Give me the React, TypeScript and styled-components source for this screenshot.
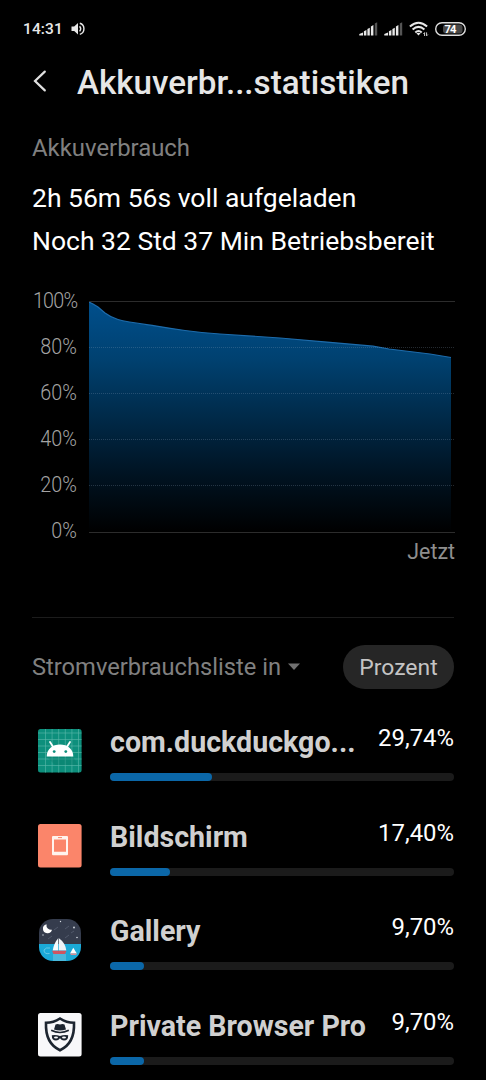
import React from 'react'
import styled, { createGlobalStyle } from 'styled-components'

const GlobalStyle = createGlobalStyle`
  * {
    box-sizing: border-box;
  }

  body {
    margin: 0;
    background: #000;
    font-family: Roboto, 'Liberation Sans', sans-serif;
  }

  svg {
    display: block;
    flex-shrink: 0;
  }
`

const Screen = styled.div`
  width: 486px;
  height: 1080px;
  overflow: hidden;
  background: #000;
  color: #fff;
`

const StatusBar = styled.div`
  display: flex;
  align-items: center;
  height: 57px;
  padding: 0 20px 0 23px;
`

const Clock = styled.span`
  margin-right: 8px;
  color: #e8e8e8;
  font-size: 15.5px;
  font-weight: 500;
  letter-spacing: 0.1px;
`

const StatusIcons = styled.div`
  display: flex;
  align-items: center;
  gap: 6px;
  margin-left: auto;
`

const Header = styled.header`
  display: flex;
  align-items: center;
  height: 50px;
  padding-left: 32px;
`

const BackButton = styled.button`
  width: 45px;
  padding: 0 0 2px;
  background: none;
  border: none;
`

const Title = styled.h1`
  margin: 0;
  color: #e6e6e6;
  font-size: 33.2px;
  font-weight: 500;
  white-space: nowrap;
`

const Summary = styled.section`
  padding: 27px 32px 0;
`

const SectionLabel = styled.div`
  margin-bottom: 15px;
  color: #808080;
  font-size: 23.9px;
  line-height: 28px;
`

const SummaryLine = styled.div`
  font-size: 26.5px;
  line-height: 42.6px;
  white-space: nowrap;
`

const ChartSection = styled.section`
  display: grid;
  grid-template-columns: 45px 366px;
  column-gap: 12px;
  height: 340px;
  margin: 16px 32px 0 32px;
  border-bottom: 1px solid #1c1c1c;
`

const AxisLabels = styled.div`
  display: flex;
  flex-direction: column;
  align-items: flex-end;
`

const AxisLabel = styled.span<{ isTight: boolean }>`
  color: #a4a4a4;
  font-size: 21.5px;
  font-weight: 300;
  line-height: 46px;
  letter-spacing: ${(p) => (p.isTight ? '-0.8px' : '0')};
  transform: scaleX(0.92);
  transform-origin: right center;
`

const Plot = styled.div`
  padding-top: 23px;
`

const PlotCaption = styled.div`
  margin-top: 4px;
  color: #8e8e8e;
  font-size: 21.4px;
  line-height: 26px;
  text-align: right;
`

const ListHeader = styled.div`
  display: flex;
  align-items: center;
  justify-content: space-between;
  margin: 27px 32px 0;
`

const SortLabel = styled.div`
  display: flex;
  align-items: center;
  gap: 7px;
  color: #808080;
  font-size: 23.7px;
`

const UnitButton = styled.button`
  width: 111px;
  height: 44px;
  padding: 0;
  border: none;
  border-radius: 22px;
  background: #262626;
  color: #c4c4c4;
  font-family: inherit;
  font-size: 22.9px;
`

const List = styled.div`
  padding: 40px 32px 0 38px;
`

const Row = styled.div`
  display: flex;
  align-items: flex-start;
  gap: 28px;
  height: 94.5px;
`

const RowBody = styled.div`
  flex: 1;
  min-width: 0;
`

const RowHead = styled.div`
  display: flex;
  justify-content: space-between;
  height: 44px;
`

const AppName = styled.span`
  color: #d0d0d0;
  font-size: 28.6px;
  font-weight: 700;
  line-height: 27px;
  white-space: nowrap;
`

const Percent = styled.span`
  font-size: 23.9px;
  line-height: 18px;
`

const Track = styled.div`
  height: 8px;
  border-radius: 4px;
  background: #1b1b1b;
`

const Fill = styled.div`
  height: 100%;
  border-radius: 4px;
  background: #0b67a8;
`

const SpeakerIcon = () => (
  <svg width="14" height="14" viewBox="0 0 14 14" fill="none">
    <path d="M0.5 4.6H3.2L7 1V12.6L3.2 9H0.5Z" fill="#e8e8e8" />
    <path d="M8.6 4.3Q10.8 6.8 8.6 9.4" stroke="#e8e8e8" strokeWidth="1.4" />
    <path d="M8.8 1.3C14.3 2.8 14.3 10.9 8.8 12.4" stroke="#e8e8e8" strokeWidth="1.4" />
  </svg>
)

const SignalIcon = () => (
  <svg width="19" height="14" viewBox="0 0 19 14" fill="#e8e8e8">
    <path d="M0.3 13.5V12.1L4 10.6V13.5ZM4.9 13.5V9.3L7.4 8V13.5ZM8.4 13.5V7L10.8 5.8V13.5ZM11.9 13.5V4.4L14.4 3V13.5Z" />
    <path d="M15.8 13.5V1.5L18.2 0.2V13.5Z" fill="#555" />
  </svg>
)

const WifiIcon = () => (
  <svg width="20" height="16" viewBox="0 0 20 16" fill="none" stroke="#e8e8e8" strokeWidth="2">
    <path d="M0.9 5.6Q9.5 -2.1 18.1 5.6" />
    <path d="M3.6 8.6Q9.5 3.2 15.4 8.6" />
    <path d="M6.3 11.5Q9.5 8.5 12.7 11.5" />
    <path d="M7.4 12.3L9.5 14.6L11.6 12.3Q9.5 11 7.4 12.3Z" fill="#e8e8e8" stroke="none" />
    <path d="M15.6 15V11.6L14.4 12.8M17.6 11.4V14.8L18.8 13.6" strokeWidth="0.9" />
  </svg>
)

const BatteryIcon = () => (
  <svg width="31" height="14" viewBox="0 0 31 14">
    <rect x="8" y="2.5" width="19.5" height="9" rx="3" fill="#484848" />
    <rect x="0.7" y="0.7" width="29.6" height="12.6" rx="6.3" fill="none" stroke="#dedede" strokeWidth="1.4" />
    <text x="15" y="11" fill="#fff" fontSize="11.2" fontWeight="700" textAnchor="middle" letterSpacing="-0.9">
      74
    </text>
  </svg>
)

const BackIcon = () => (
  <svg width="16" height="22" viewBox="0 0 16 22" fill="none">
    <path d="M12.8 1.6L3 11L12.8 20.4" stroke="#e0e0e0" strokeWidth="2.2" strokeLinecap="round" />
  </svg>
)

const AndroidIcon = () => (
  <svg width="44" height="44" viewBox="0 0 44 44">
    <rect width="43.6" height="43.6" rx="2.5" fill="#0d8f7c" />
    <path
      d="M7.5 0V43.6M14.1 0V43.6M20.7 0V43.6M27.3 0V43.6M33.9 0V43.6M40.5 0V43.6M0 4H43.6M0 10.5H43.6M0 17H43.6M0 23.5H43.6M0 30H43.6M0 36.5H43.6"
      stroke="#5cb9ab"
      strokeWidth="0.6"
    />
    <path d="M9 28L17 36H40L35 28Z" fill="#087866" opacity="0.35" />
    <path d="M8.7 27.5C8.7 20 14.5 15.5 22 15.5S35.3 20 35.3 27.5Z" fill="#fff" />
    <path d="M12 13L15.5 18.5M32 13L28.5 18.5" stroke="#fff" strokeWidth="1.8" strokeLinecap="round" />
    <circle cx="16.2" cy="22.6" r="1.4" fill="#0d8f7c" />
    <circle cx="27.8" cy="22.6" r="1.4" fill="#0d8f7c" />
  </svg>
)

const DisplayIcon = () => (
  <svg width="44" height="44" viewBox="0 0 44 44">
    <rect width="43.6" height="43.6" rx="2.5" fill="#fb856a" />
    <path
      d="M15 12H29Q30 12 30 13V30Q30 31.2 29 31.2H15Q14 31.2 14 30V13Q14 12 15 12ZM16 15.5V27.8H28V15.5Z"
      fill="#fff3ee"
      fillRule="evenodd"
    />
    <path d="M20 13.6H24" stroke="#fb856a" strokeWidth="1" />
  </svg>
)

const GalleryIcon = () => (
  <svg width="44" height="44" viewBox="0 0 44 44">
    <clipPath id="gallery">
      <rect x="1" y="1" width="42" height="42" rx="14" />
    </clipPath>
    <g clipPath="url(#gallery)">
      <rect width="44" height="26" fill="#353c4d" />
      <rect y="26" width="44" height="18" fill="#1ba9d7" />
      <path d="M8.5 6.2A4.6 4.6 0 1 0 14 11.8A4.8 4.8 0 0 1 8.5 6.2Z" fill="#fff" />
      <path d="M16 12L20 9M27 11L31 8M27 20L31 17M10 21L14 18M33 15L36 13" stroke="#596174" strokeWidth="0.8" />
      <g fill="#d6dbe3">
        <circle cx="36" cy="9.5" r="0.9" />
        <circle cx="22.5" cy="3.5" r="0.7" />
        <circle cx="5" cy="17" r="0.7" />
        <circle cx="39" cy="19.5" r="0.8" />
      </g>
      <path d="M11.5 35.5Q6 36.5 6 32Q8 29 12 30" stroke="#68c9e5" strokeWidth="1" fill="none" />
      <path d="M15 36H28V43H15Z" fill="#5abddd" opacity="0.75" />
      <path d="M20 20.5V32.5H14.7Q16 25 20 20.5Z" fill="#f7fafb" />
      <path d="M20.7 20Q27.5 25 28.3 32.5H20.7Z" fill="#eef2f5" />
      <path d="M14 32.7H28.5L27 36H15.5Z" fill="#cf5560" />
      <path d="M32 35.5L35.3 29.8L38.8 35.5Z" fill="#fff" />
      <path d="M32 35.5H39L38 37H33Z" fill="#d98d95" />
    </g>
  </svg>
)

const PrivateBrowserIcon = () => (
  <svg width="44" height="44" viewBox="0 0 44 44">
    <rect width="43.6" height="43.6" rx="2.5" fill="#f8f8fa" />
    <path
      d="M22 5.5Q28.5 9.8 36 9.8C36.5 22 33.5 32 22 37.2C10.5 32 7.5 22 8 9.8Q15.5 9.8 22 5.5Z"
      fill="none"
      stroke="#1d2530"
      strokeWidth="2.6"
    />
    <path d="M17.5 11.5Q19.5 10.5 22 11.5Q24.5 10.5 26.5 11.5L28 16.5Q22 18.6 16 16.5Z" fill="#1d2530" />
    <path d="M13.2 17.3Q22 21.8 30.8 17.3" fill="none" stroke="#1d2530" strokeWidth="1.6" />
    <path
      d="M13.8 22.2Q18 21.3 22 23Q26 21.3 30.2 22.2Q30.3 27.5 26 27.5Q23.6 27.5 22 25.3Q20.4 27.5 18 27.5Q13.7 27.5 13.8 22.2Z"
      fill="#1d2530"
    />
    <ellipse cx="18" cy="24.5" rx="2" ry="1" fill="#f8f8fa" />
    <ellipse cx="26" cy="24.5" rx="2" ry="1" fill="#f8f8fa" />
  </svg>
)

const CURVE =
  'M0 1L4 3L9 6L16 12Q22 16.5 29 18.5C38 21 50 22.5 66 24.8Q82 27.5 96 29.5Q112 31.7 131 33L191 37L241 41.3L284 45.2L300 48L341 53L362 56.5'

const BatteryChart = () => (
  <svg width="366" height="234" viewBox="0 0 366 234" fill="none">
    <defs>
      <linearGradient id="level" x1="0" y1="0" x2="0" y2="1">
        <stop offset="0" stopColor="#004f8c" />
        <stop offset="0.25" stopColor="#004170" />
        <stop offset="0.5" stopColor="#002a49" />
        <stop offset="0.75" stopColor="#001322" />
        <stop offset="1" stopColor="#000" />
      </linearGradient>
    </defs>
    <path d={`${CURVE}V231H0Z`} fill="url(#level)" />
    <path d={CURVE} stroke="#1d6cac" strokeWidth="1.2" />
    <path d="M0 0.5H366M0 231.5H366" stroke="#2c2c2c" />
    {[46.5, 92.5, 138.5, 184.5].map((y) => (
      <path key={y} d={`M0 ${y}H366`} stroke="#8aa4b8" strokeOpacity="0.26" strokeDasharray="1 1" />
    ))}
  </svg>
)

interface AppUsage {
  name: string
  usage: number
  icon: React.ReactNode
}

const apps: AppUsage[] = [
  { name: 'com.duckduckgo...', usage: 29.74, icon: <AndroidIcon /> },
  { name: 'Bildschirm', usage: 17.4, icon: <DisplayIcon /> },
  { name: 'Gallery', usage: 9.7, icon: <GalleryIcon /> },
  { name: 'Private Browser Pro', usage: 9.7, icon: <PrivateBrowserIcon /> },
]

const UsageRow: React.FC<AppUsage> = ({ name, usage, icon }) => (
  <Row>
    {icon}
    <RowBody>
      <RowHead>
        <AppName>{name}</AppName>
        <Percent>{usage.toFixed(2).replace('.', ',')}%</Percent>
      </RowHead>
      <Track>
        <Fill style={{ width: `${Math.max(usage, 10)}%` }} />
      </Track>
    </RowBody>
  </Row>
)

const App: React.FC = () => {
  return (
    <Screen>
      <GlobalStyle />

      <StatusBar>
        <Clock>14:31</Clock>
        <SpeakerIcon />
        <StatusIcons>
          <SignalIcon />
          <SignalIcon />
          <WifiIcon />
          <BatteryIcon />
        </StatusIcons>
      </StatusBar>

      <Header>
        <BackButton aria-label="Zurück">
          <BackIcon />
        </BackButton>
        <Title>Akkuverbr...statistiken</Title>
      </Header>

      <Summary>
        <SectionLabel>Akkuverbrauch</SectionLabel>
        <SummaryLine>2h 56m 56s voll aufgeladen</SummaryLine>
        <SummaryLine>Noch 32 Std 37 Min Betriebsbereit</SummaryLine>
      </Summary>

      <ChartSection>
        <AxisLabels>
          {[100, 80, 60, 40, 20, 0].map((level) => (
            <AxisLabel key={level} isTight={level === 100}>
              {level}%
            </AxisLabel>
          ))}
        </AxisLabels>
        <Plot>
          <BatteryChart />
          <PlotCaption>Jetzt</PlotCaption>
        </Plot>
      </ChartSection>

      <ListHeader>
        <SortLabel>
          Stromverbrauchsliste in
          <svg width="12" height="8" viewBox="0 0 12 8">
            <path d="M0 0.5H12L6 7Z" fill="#707070" />
          </svg>
        </SortLabel>
        <UnitButton>Prozent</UnitButton>
      </ListHeader>

      <List>
        {apps.map((app) => (
          <UsageRow key={app.name} {...app} />
        ))}
      </List>
    </Screen>
  )
}

export default App
